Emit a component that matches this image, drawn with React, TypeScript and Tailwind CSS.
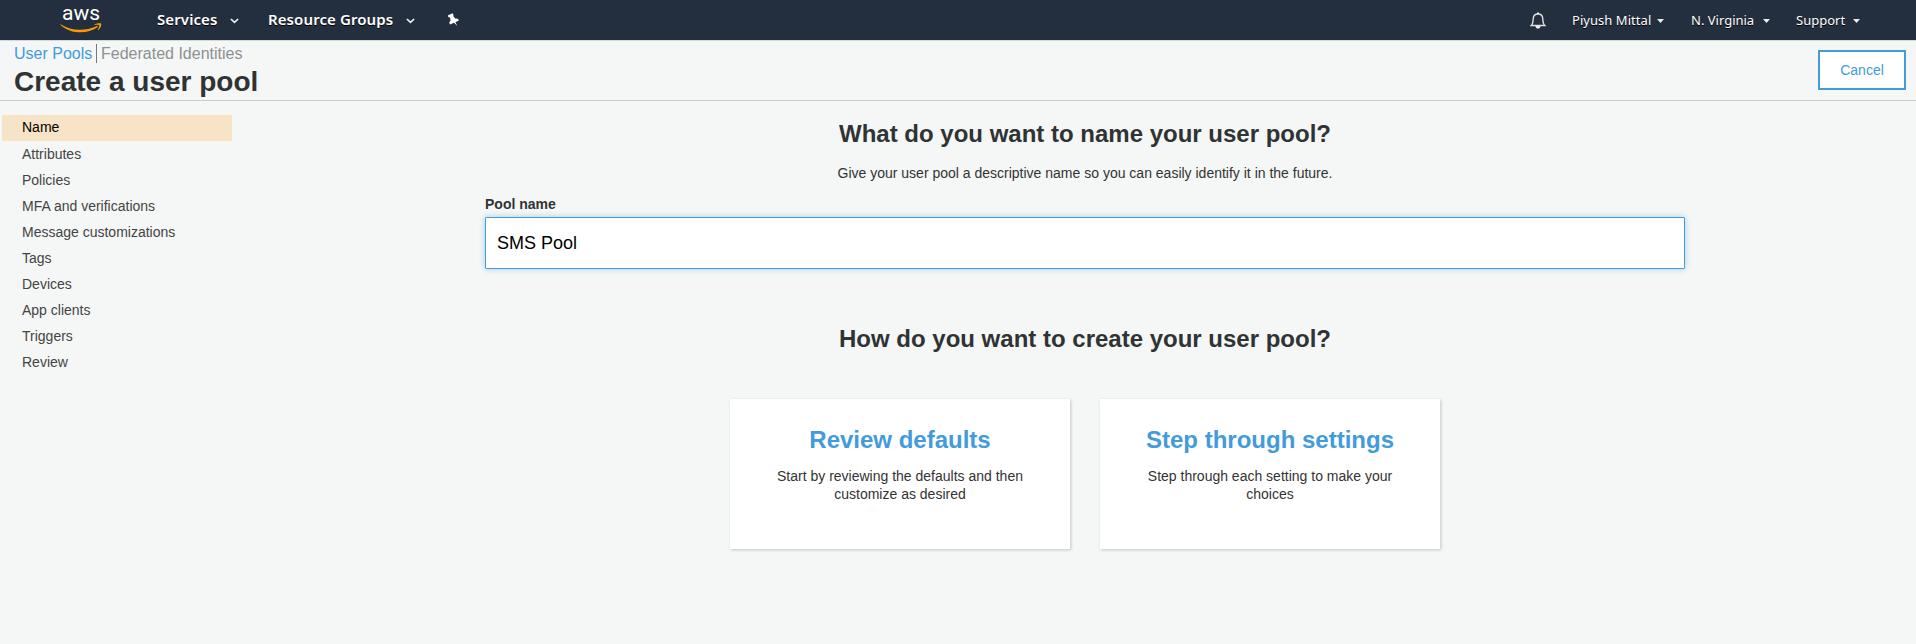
import type { ReactNode } from "react";

const steps = [
  "Attributes",
  "Policies",
  "MFA and verifications",
  "Message customizations",
  "Tags",
  "Devices",
  "App clients",
  "Triggers",
  "Review",
];

function AwsLogo() {
  return (
    <div className="flex w-[42px] flex-col items-center">
      <span className="h-[18px] font-['Roboto',sans-serif] text-[21px] leading-[14px] font-normal text-white [text-shadow:none]">
        aws
      </span>
      <svg width="42" height="11" viewBox="0 0 42 11" className="-mt-[1px]">
        <path d="M0.8 1.2C11 7.8 24 8.6 36.5 3.2C37.6 2.8 38.2 3.8 37.2 4.6C27 11.6 10 11 0.6 1.9C0.2 1.4 0.4 1 0.8 1.2Z" fill="#ff9900" />
        <path d="M34.5 1.4C37 0 40.8 0 41.2 0.7C41.6 1.6 40.8 5 38.6 7C38.2 7.3 37.8 7.1 38 6.7C38.8 4.8 39.6 2.8 39.2 2.2C38.8 1.6 36.5 1.8 34.8 2C34.3 2.1 34.1 1.7 34.5 1.4Z" fill="#ff9900" />
      </svg>
    </div>
  );
}

function Chevron() {
  return (
    <svg width="9" height="6" viewBox="0 0 9 6" fill="none">
      <path d="M0.9 1L4.5 4.4L8.1 1" stroke="#eee" strokeWidth="1.7" />
    </svg>
  );
}

function Caret() {
  return (
    <svg width="7" height="4" viewBox="0 0 7 4">
      <path d="M0 0H7L3.5 4Z" fill="#eee" />
    </svg>
  );
}

function Option({ title, children }: { title: string; children: ReactNode }) {
  return (
    <button className="flex h-[150px] w-[340px] flex-col items-center bg-white px-10 pt-[26px] shadow-[1px_1px_3px_rgba(0,0,0,0.2)]">
      <span className="text-2xl leading-[30px] font-bold text-[#429bdb]">{title}</span>
      <span className="mt-[12px] text-sm leading-[18px] text-[#333]">{children}</span>
    </button>
  );
}

export default function App() {
  return (
    <div className="h-[644px] w-full overflow-hidden bg-[#f4f7f6] font-['Liberation_Sans',Arial,sans-serif] text-[#303333]">
      <nav className="flex h-10 items-center bg-[#232f3e] pl-[60px] font-['Noto_Sans',sans-serif] text-white [text-shadow:0_1px_0_#000]">
        <AwsLogo />
        <div className="ml-[55px] flex items-center text-[15px] font-semibold">
          <span className="w-[60px] pb-px tracking-[0.1px] whitespace-nowrap">Services</span>
          <span className="ml-[13px] pt-px"><Chevron /></span>
          <span className="ml-[29px] w-[125px] pb-px tracking-[0.1px] whitespace-nowrap">Resource Groups</span>
          <span className="ml-[13px] pt-px"><Chevron /></span>
        </div>
        <svg width="13" height="14" viewBox="0 0 13 14" className="ml-[32px]">
          <path d="M0.8 2.5L5.6 0.2L6.6 1.9L6.2 3L8.2 5.4L10.9 5.8L11.9 7.6L8.4 9.2L10.4 13L7 9.8L3 11.4L2.2 9.6L3.6 7.4L2.9 4.4L1.5 4.2Z" fill="#fff" />
        </svg>
        <div className="ml-auto flex items-center pr-[56px] text-[13px]">
          <svg width="16" height="18" viewBox="0 0 16 18" fill="none" className="mt-px mr-[26px]">
            <path d="M1.2 13.5C3 12 3 10.5 3.2 6.8C3.4 3.5 5.2 2 8 2S12.6 3.5 12.8 6.8C13 10.5 13 12 14.8 13.5Z" stroke="#ddd" strokeWidth="1.4" />
            <path d="M7 0.5H9V2H7ZM5.5 14H10.5C10.3 17.5 5.7 17.5 5.5 14Z" fill="#eee" />
          </svg>
          <span className="w-[77px] pt-[2px] tracking-[0.05px] whitespace-nowrap">Piyush Mittal</span>
          <span className="ml-[8px] pt-px"><Caret /></span>
          <span className="ml-[27px] w-[63px] pt-[2px] whitespace-nowrap">N. Virginia</span>
          <span className="ml-[9px] pt-px"><Caret /></span>
          <span className="ml-[26px] w-[48px] pt-[2px] whitespace-nowrap">Support</span>
          <span className="ml-[9px] pt-px"><Caret /></span>
        </div>
      </nav>
      <header className="flex h-[61px] justify-between border-t border-b border-t-[#d5d8d7] border-b-[#c8cccb] pr-[10px] pl-[14px]">
        <div>
          <div className="mt-[3px] flex h-[19px] text-base leading-[19px]">
            <a className="w-[79px] whitespace-nowrap text-[#429bdb]">User Pools</a>
            <span className="ml-[3px] border-l border-[#777] pl-1 text-[#8c9191]">Federated Identities</span>
          </div>
          <h1 className="mt-[3px] text-[28px] leading-8 font-bold">Create a user pool</h1>
        </div>
        <button className="mt-[9px] h-10 w-[88px] border-2 border-[#429bdb] bg-white text-sm text-[#429bdb]">Cancel</button>
      </header>
      <div className="flex">
        <aside className="ml-[2px] w-[230px] pt-[14px] text-sm text-[#444]">
          <div className="h-[26px] bg-[#f7e3c5] pl-5 leading-[25px] text-black">Name</div>
          {steps.map((s) => (
            <div key={s} className="h-[26px] pl-5 leading-[26px]">{s}</div>
          ))}
        </aside>
        <main className="ml-[253px] flex w-[1200px] flex-col items-center">
          <h2 className="mt-[18px] text-2xl leading-[30px] font-bold">What do you want to name your user pool?</h2>
          <p className="mt-[15px] text-sm leading-[18px] text-[#333]">Give your user pool a descriptive name so you can easily identify it in the future.</p>
          <label className="mt-[13px] self-start text-sm leading-[18px] font-bold">Pool name</label>
          <input
            defaultValue="SMS Pool"
            className="mt-[4px] h-[52px] w-[1200px] rounded-[1px] border border-[#429bdb] bg-white px-[11px] text-lg text-black shadow-[0_0_6px_rgba(66,139,219,0.4)] outline-none"
          />
          <h2 className="mt-[55px] text-2xl leading-[30px] font-bold">How do you want to create your user pool?</h2>
          <div className="mt-[45px] flex gap-[30px]">
            <Option title="Review defaults">Start by reviewing the defaults and then customize as desired</Option>
            <Option title="Step through settings">Step through each setting to make your choices</Option>
          </div>
        </main>
      </div>
    </div>
  );
}
